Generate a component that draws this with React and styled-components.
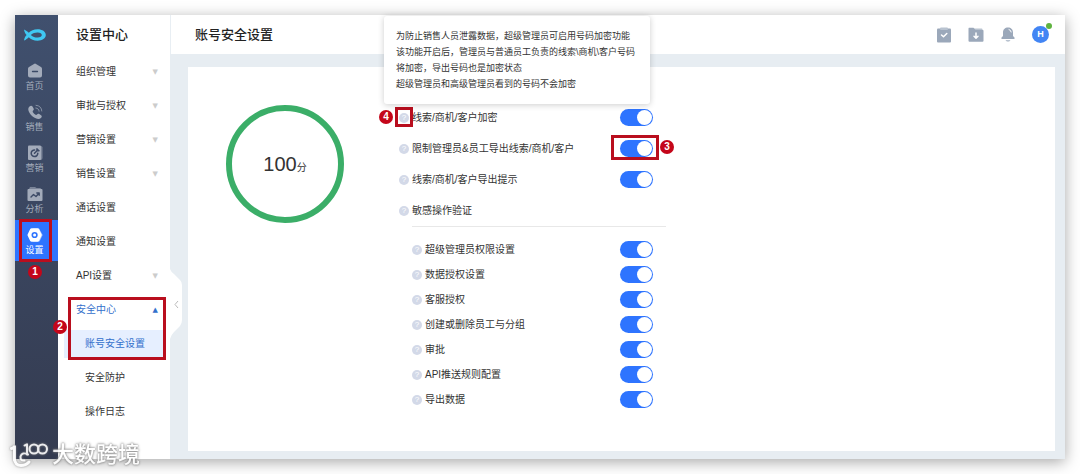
import React, { useState } from 'react';
import styled, { createGlobalStyle } from 'styled-components';

const menuItems = [
    { label: '组织管理', arrow: true },
    { label: '审批与授权', arrow: true },
    { label: '营销设置', arrow: true },
    { label: '销售设置', arrow: true },
    { label: '通话设置' },
    { label: '通知设置' },
    { label: 'API设置', arrow: true },
];

const detailSettings = [
    '超级管理员权限设置',
    '数据授权设置',
    '客服授权',
    '创建或删除员工与分组',
    '审批',
    'API推送规则配置',
    '导出数据',
];

const FishLogo = () => (
    <svg width="22" height="12" viewBox="0 0 22 12" aria-hidden="true">
        <path fill="#3fc8f2" fillRule="evenodd" d="M0 0.5C2 1.3 3.4 2.4 4.8 3.8C7 1.8 9.6 0.3 13.5 0.3C18.3 0.3 21.8 2.7 21.8 6C21.8 9.3 18.3 11.7 13.5 11.7C9.6 11.7 7 10.2 4.8 8.2C3.4 9.6 2 10.7 0 11.5C0.4 9 1.3 7.4 2.6 6C1.3 4.6 0.4 3 0 0.5ZM6.8 6C9 8 11.4 8.6 13.8 8.5C16.2 8.4 17.8 7.5 17.8 6C17.8 4.5 16.2 3.6 13.8 3.5C11.4 3.4 9 4 6.8 6Z" />
    </svg>
);

const HomeIcon = () => (
    <svg width="16" height="16" viewBox="0 0 16 16" aria-hidden="true">
        <path fill="currentColor" d="M7 0.9Q8 0.3 9 0.9L14 3.9Q15 4.5 15 5.7V12.500Q15 14.500 13 14.500H3Q1 14.500 1 12.500V5.700Q1 4.500 2 3.900Z" />
        <path stroke="#3c4a66" strokeWidth="1.3" strokeLinecap="round" d="M5.5 8.5H10.5" />
    </svg>
);

const PhoneIcon = () => (
    <svg width="16" height="16" viewBox="0 0 16 16" fill="none" aria-hidden="true">
        <path fill="currentColor" d="M2.8 2.2C3.8 1.3 4.9 1.6 5.5 2.6L6.6 4.5C7.1 5.5 6.7 6.1 5.9 6.8C5.5 7.2 5.6 7.7 5.9 8.2C6.7 9.5 7.5 10.2 8.6 10.8C9.2 11.1 9.6 11 10 10.5C10.7 9.7 11.4 9.5 12.3 10L14 11.2C15 11.9 15 12.9 14.2 13.7C12.5 15.5 9.9 15.3 7.1 13.6C4.6 12 2.6 9.7 1.7 7.3C0.9 5.1 1.2 3.5 2.8 2.2Z" />
        <path stroke="currentColor" strokeLinecap="round" opacity="0.7" d="M9 1.3C12.5 1.5 14.7 3.8 14.8 7M8.8 4C10.8 4.2 12 5.4 12.1 7.2" />
    </svg>
);

const TargetIcon = () => (
    <svg width="16" height="16" viewBox="0 0 16 16" fill="none" aria-hidden="true">
        <path fill="currentColor" opacity="0.6" d="M4 1H14Q15.500 1 15.500 2.500V13Q15.500 15 13.500 15H4Z" />
        <rect x="1" y="0.5" width="13" height="14.5" rx="1" fill="currentColor" />
        <path stroke="#3c4a66" strokeWidth="1.5" strokeLinecap="round" d="M7.6 5A3.300 3.300 0 1 0 10.800 8.300M7.500 8.300L11 4.800M10 3.800V5.800H12" />
    </svg>
);

const ChartIcon = () => (
    <svg width="16" height="16" viewBox="0 0 16 16" fill="none" aria-hidden="true">
        <path fill="currentColor" opacity="0.6" d="M2 3L3 1H8L9.5 2H13.500L14.500 4Z" />
        <rect x="0.5" y="3" width="15" height="12" rx="1" fill="currentColor" />
        <path stroke="#3c4a66" strokeWidth="1.4" strokeLinecap="round" strokeLinejoin="round" d="M4 11L6.5 8.5L9 10.500L12 7.300M9.800 7H12.200V9.200" />
    </svg>
);

const HexIcon = () => (
    <svg width="16" height="16" viewBox="0 0 16 16" fill="none" aria-hidden="true">
        <path fill="currentColor" opacity="0.5" d="M6 1.5H12L15.700 8L12.500 14.500H6Z" />
        <path fill="currentColor" d="M4.700 1.200H10.500Q11.500 1.200 12 2L14.500 7.200Q15 8 14.500 8.800L12 14Q11.500 14.800 10.500 14.800H4.700Q3.700 14.800 3.200 14L0.700 8.800Q0.200 8 0.700 7.200L3.200 2Q3.700 1.200 4.700 1.200Z" />
        <circle cx="7.6" cy="8" r="2.3" stroke="#2e74ff" strokeWidth="1.6" />
    </svg>
);

const TaskIcon = () => (
    <svg width="14" height="16" viewBox="0 0 14 16" fill="none" aria-hidden="true">
        <rect y="1.5" width="14" height="14" rx="1" fill="#9ba8ba" />
        <rect x="3" y="0.5" width="8" height="2.5" rx="1" fill="#b9c3d0" />
        <path stroke="#fff" strokeWidth="1.5" strokeLinecap="round" strokeLinejoin="round" d="M4.500 8L6.500 9.800L9.800 6.500" />
    </svg>
);

const FolderIcon = () => (
    <svg width="16" height="16" viewBox="0 0 16 16" fill="none" aria-hidden="true">
        <path fill="#b9c3d0" d="M6 1.500H13.500Q14.500 1.500 14.500 2.500V6H6Z" />
        <path fill="#9ba8ba" d="M1 0.800H5.500L7.500 3H15Q15.500 3 15.500 4V13.800Q15.500 14.800 14.500 14.800H1.500Q0.500 14.800 0.500 13.800V1.800Q0.500 0.800 1 0.800Z" />
        <path stroke="#fff" strokeWidth="1.5" strokeLinecap="round" strokeLinejoin="round" d="M8 6V11M6 9.200L8 11.200L10 9.200" />
    </svg>
);

const BellIcon = () => (
    <svg width="14" height="16" viewBox="0 0 14 16" fill="none" aria-hidden="true">
        <path fill="#9ba8ba" d="M7 0.500C10 0.500 12 2.500 12 5.500V9L13.500 10.500Q14 12 13 12H1Q0 12 0.500 10.500L2 9V5.500C2 2.500 4 0.500 7 0.500Z" />
        <path fill="#b9c3d0" d="M4.500 13H9.500Q9 14.800 7 14.800Q5 14.800 4.500 13Z" />
        <path stroke="#fff" strokeLinecap="round" d="M8 2.500Q10 3.100 10.200 5" />
    </svg>
);

const railItems = [
    { label: '首页', icon: HomeIcon },
    { label: '销售', icon: PhoneIcon },
    { label: '营销', icon: TargetIcon },
    { label: '分析', icon: ChartIcon },
];

const Setting = ({ label, marked, tooltip }) => {
    const [on, setOn] = useState(true);

    return (
        <SettingRow>
            <Help type="button" aria-label={`${label}说明`}>
                ?
                {tooltip}
            </Help>
            <SettingLabel>
                <span>{label}</span>
                <SwitchWrap>
                    <Switch type="checkbox" role="switch" checked={on} onChange={() => setOn(!on)} />
                    {marked && <Marker $inset="-5px -6px -3px -9px"><Badge $left="46px" $top="2px">3</Badge></Marker>}
                </SwitchWrap>
            </SettingLabel>
        </SettingRow>
    );
};

const App = () => (
    <>
        <GlobalStyle />
        <Page>
            <Frame>
                <Rail>
                    <Logo href="#" aria-label="首页"><FishLogo /></Logo>
                    {railItems.map(({ label, icon: Icon }) => (
                        <RailItem href="#" key={label}>
                            <Icon />
                            {label}
                        </RailItem>
                    ))}
                    <RailItem href="#" $active>
                        <HexIcon />
                        设置
                        <Marker $inset="-1px 6px -1px 4px"><Badge $left="6px" $top="43px">1</Badge></Marker>
                    </RailItem>
                </Rail>
                <Sidebar>
                    <SideTitle>设置中心</SideTitle>
                    {menuItems.map(({ label, arrow }) => (
                        <MenuItem href="#" key={label}>
                            {label}
                            {arrow && <Arrow>▼</Arrow>}
                        </MenuItem>
                    ))}
                    <OpenGroup>
                        <MenuItem href="#" $active>
                            安全中心
                            <Arrow $active>▲</Arrow>
                        </MenuItem>
                        <SubItem href="#" $active>账号安全设置</SubItem>
                        <Marker $inset="4px 4px -2px 10px"><Badge $left="-18px" $top="20px">2</Badge></Marker>
                    </OpenGroup>
                    <SubItem href="#">安全防护</SubItem>
                    <SubItem href="#">操作日志</SubItem>
                    <Collapse type="button" aria-label="收起菜单">
                        <svg width="12" height="70" viewBox="0 0 12 70" fill="none" aria-hidden="true">
                            <path fill="#fff" d="M0 0Q1 3 4 5L10 11Q12 13 12 16V51Q12 54 10 57L4 63Q1 66 0 70Z" />
                            <path stroke="#bbb" d="M8 32L5 35.500L8 39" />
                        </svg>
                    </Collapse>
                </Sidebar>
                <Main>
                    <Header>
                        <PageTitle>账号安全设置</PageTitle>
                        <Tools>
                            <ToolButton type="button" aria-label="任务"><TaskIcon /></ToolButton>
                            <ToolButton type="button" aria-label="下载"><FolderIcon /></ToolButton>
                            <ToolButton type="button" aria-label="通知"><BellIcon /></ToolButton>
                            <Avatar type="button">H</Avatar>
                        </Tools>
                    </Header>
                    <Content>
                        <Card>
                            <Score>100<small>分</small></Score>
                            <Settings>
                                <Setting
                                    label="线索/商机/客户加密"
                                    tooltip={(
                                        <>
                                            <Tooltip role="tooltip">
                                                为防止销售人员泄露数据，超级管理员可启用号码加密功能<br />
                                                该功能开启后，管理员与普通员工负责的线索\商机\客户号码<br />
                                                将加密，导出号码也是加密状态<br />
                                                超级管理员和高级管理员看到的号码不会加密
                                            </Tooltip>
                                            <Marker $inset="-6px -4px -4px -4px"><Badge $left="-19px" $top="0px">4</Badge></Marker>
                                        </>
                                    )}
                                />
                                <Setting label="限制管理员&员工导出线索/商机/客户" marked />
                                <Setting label="线索/商机/客户导出提示" />
                                <SettingRow>
                                    <Help type="button" aria-label="敏感操作验证说明">?</Help>
                                    敏感操作验证
                                </SettingRow>
                                <DetailList>
                                    {detailSettings.map((label) => <Setting label={label} key={label} />)}
                                </DetailList>
                            </Settings>
                        </Card>
                    </Content>
                </Main>
            </Frame>
            <Watermark>
                <svg width="38" height="26" viewBox="0 0 38 26" fill="none" stroke="#fff" strokeLinecap="round" aria-hidden="true">
                    <path strokeWidth="3" d="M1.500 6.500Q4.500 6 4.500 3.500V18" />
                    <path strokeWidth="3" d="M4.500 17Q5 23.500 11 23.500Q16 23.500 19 20" />
                    <path strokeWidth="2" d="M18 12.500Q12 9.500 10.500 14.500Q10 19 14.500 18.500" />
                    <path strokeWidth="2" d="M14.500 3.500Q17 3 17 1.500V12.500" />
                    <circle strokeWidth="2" cx="24" cy="7" r="4.500" />
                    <circle strokeWidth="2" cx="32.500" cy="7" r="4.500" />
                </svg>
                大数跨境
            </Watermark>
        </Page>
    </>
);

const GlobalStyle = createGlobalStyle`
    * {
        box-sizing: border-box;
    }
    body {
        margin: 0;
        background: #fff;
        color: #333;
        font: 10px/16px "Liberation Sans", "Noto Sans CJK SC", sans-serif;
    }
    a {
        color: inherit;
        text-decoration: none;
    }
    button {
        padding: 0;
        border: 0;
        background: none;
        font: inherit;
        cursor: pointer;
    }
`;

const Page = styled.div`
    position: relative;
    display: flex;
    min-height: 100vh;
    padding: 15px;
`;

const Frame = styled.div`
    display: flex;
    flex: 1;
    min-width: 0;
    box-shadow: 0 3px 14px rgba(0, 0, 0, 0.35);
`;

const Rail = styled.nav`
    flex: 0 0 43px;
    background: linear-gradient(#40506e, #343b50);
`;

const Logo = styled.a`
    display: flex;
    align-items: center;
    justify-content: center;
    height: 39px;
    margin-bottom: 2px;
    padding-right: 4px;
`;

const RailItem = styled.a`
    position: relative;
    display: flex;
    flex-direction: column;
    align-items: center;
    height: 41px;
    padding: 7px 4px 0 0;
    background: ${({ $active }) => ($active ? '#2e74ff' : 'transparent')};
    color: ${({ $active }) => ($active ? '#fff' : '#a3abba')};
    font-size: 9px;
    line-height: 14px;

    svg {
        flex-shrink: 0;
    }
`;

const Marker = styled.span`
    position: absolute;
    inset: ${({ $inset }) => $inset};
    border: 3px solid #b90e1e;
    pointer-events: none;
`;

const Badge = styled.span`
    position: absolute;
    left: ${({ $left }) => $left};
    top: ${({ $top }) => $top};
    width: 14px;
    height: 14px;
    border-radius: 50%;
    background: #c4061a;
    color: #fff;
    font-size: 10px;
    font-weight: bold;
    line-height: 14px;
    text-align: center;
`;

const Sidebar = styled.aside`
    position: relative;
    flex: 0 0 112px;
    background: #fff;
`;

const SideTitle = styled.h2`
    margin: 0;
    padding-left: 18px;
    color: #222;
    font-size: 13px;
    font-weight: 500;
    line-height: 40px;
`;

const MenuItem = styled.a`
    display: flex;
    align-items: center;
    justify-content: space-between;
    height: 34px;
    padding: 0 12px 0 18px;
    color: ${({ $active }) => ($active ? '#3370cc' : 'inherit')};
`;

const Arrow = styled.span`
    color: ${({ $active }) => ($active ? '#3370cc' : '#ccc')};
    font-family: "DejaVu Sans", sans-serif;
    font-size: 7px;
`;

const OpenGroup = styled.div`
    position: relative;
`;

const SubItem = styled.a`
    display: block;
    margin: 3px 6px 6px;
    padding-left: 21px;
    background: ${({ $active }) => ($active ? '#e6efff' : 'transparent')};
    color: ${({ $active }) => ($active ? '#3370cc' : 'inherit')};
    line-height: 28px;
`;

const Collapse = styled.button`
    position: absolute;
    left: 100%;
    top: 254px;
    z-index: 1;
    line-height: 0;
`;

const Main = styled.main`
    display: flex;
    flex: 1;
    flex-direction: column;
    min-width: 0;
`;

const Header = styled.header`
    display: flex;
    align-items: center;
    justify-content: space-between;
    height: 39px;
    padding: 0 16px 0 24px;
    border-left: 1px solid #e8eef3;
    background: #fff;
`;

const PageTitle = styled.h1`
    margin: 0;
    color: #222;
    font-size: 13px;
    font-weight: 500;
`;

const Tools = styled.div`
    display: flex;
    align-items: center;
    gap: 17px;
`;

const ToolButton = styled.button`
    display: flex;
`;

const Avatar = styled.button`
    position: relative;
    width: 17px;
    height: 17px;
    border-radius: 50%;
    background: #4285f4;
    color: #fff;
    font-size: 9px;
    font-weight: bold;
    line-height: 17px;

    &::after {
        position: absolute;
        top: -3px;
        right: -3px;
        width: 6px;
        height: 6px;
        border-radius: 50%;
        background: #5fb33f;
        content: '';
    }
`;

const Content = styled.div`
    display: flex;
    flex: 1;
    padding: 13px 10px 8px 18px;
    background: #e7edf2;
`;

const Card = styled.section`
    display: flex;
    flex: 1;
    gap: 55px;
    padding: 35px 38px;
    background: #fff;
`;

const Score = styled.div`
    display: flex;
    flex: 0 0 118px;
    align-items: baseline;
    justify-content: center;
    height: 118px;
    margin-top: 3px;
    border: 6px solid #3bae68;
    border-radius: 50%;
    font-size: 20px;
    line-height: 106px;

    small {
        font-size: 10px;
    }
`;

const Settings = styled.div`
    flex: 0 1 267px;
`;

const SettingRow = styled.div`
    display: flex;
    align-items: center;
    gap: 3px;
    height: 31px;
`;

const Help = styled.button`
    position: relative;
    flex: 0 0 10px;
    height: 10px;
    border-radius: 50%;
    background: #d3d9e8;
    color: #fff;
    font-size: 8px;
    line-height: 10px;
`;

const SettingLabel = styled.label`
    display: flex;
    flex: 1;
    align-items: center;
    justify-content: space-between;
    padding-right: 13px;
`;

const SwitchWrap = styled.span`
    position: relative;
    display: flex;
`;

const Switch = styled.input`
    width: 33px;
    height: 17px;
    margin: 0;
    padding: 1px;
    border-radius: 9px;
    background: #bfc5d0;
    appearance: none;
    cursor: pointer;

    &::before {
        display: block;
        width: 15px;
        height: 15px;
        border-radius: 50%;
        background: #fff;
        content: '';
    }

    &:checked {
        background: #2e74ff;
    }

    &:checked::before {
        margin-left: auto;
    }
`;

const Tooltip = styled.span`
    position: absolute;
    left: -15px;
    bottom: 19px;
    z-index: 2;
    padding: 12px 15px 12px 12px;
    border-radius: 3px;
    background: #fff;
    box-shadow: 0 1px 6px rgba(0, 0, 0, 0.2);
    color: #333;
    font-size: 9px;
    line-height: 16px;
    text-align: left;
    white-space: nowrap;
`;

const DetailList = styled.div`
    margin-left: 13px;
    padding-top: 10px;
    border-top: 1px solid #e8e8e8;

    ${SettingRow} {
        height: 25px;
    }
`;

const Watermark = styled.div`
    position: absolute;
    left: 10px;
    bottom: 6px;
    display: flex;
    align-items: center;
    gap: 4px;
    color: #fff;
    font-size: 22px;
    font-weight: 500;
    line-height: 26px;
    opacity: 0.9;
    text-shadow: 0 0 3px #777, 0 0 2px #888;

    svg {
        filter: drop-shadow(0 0 1px #888);
    }
`;

export default App;
